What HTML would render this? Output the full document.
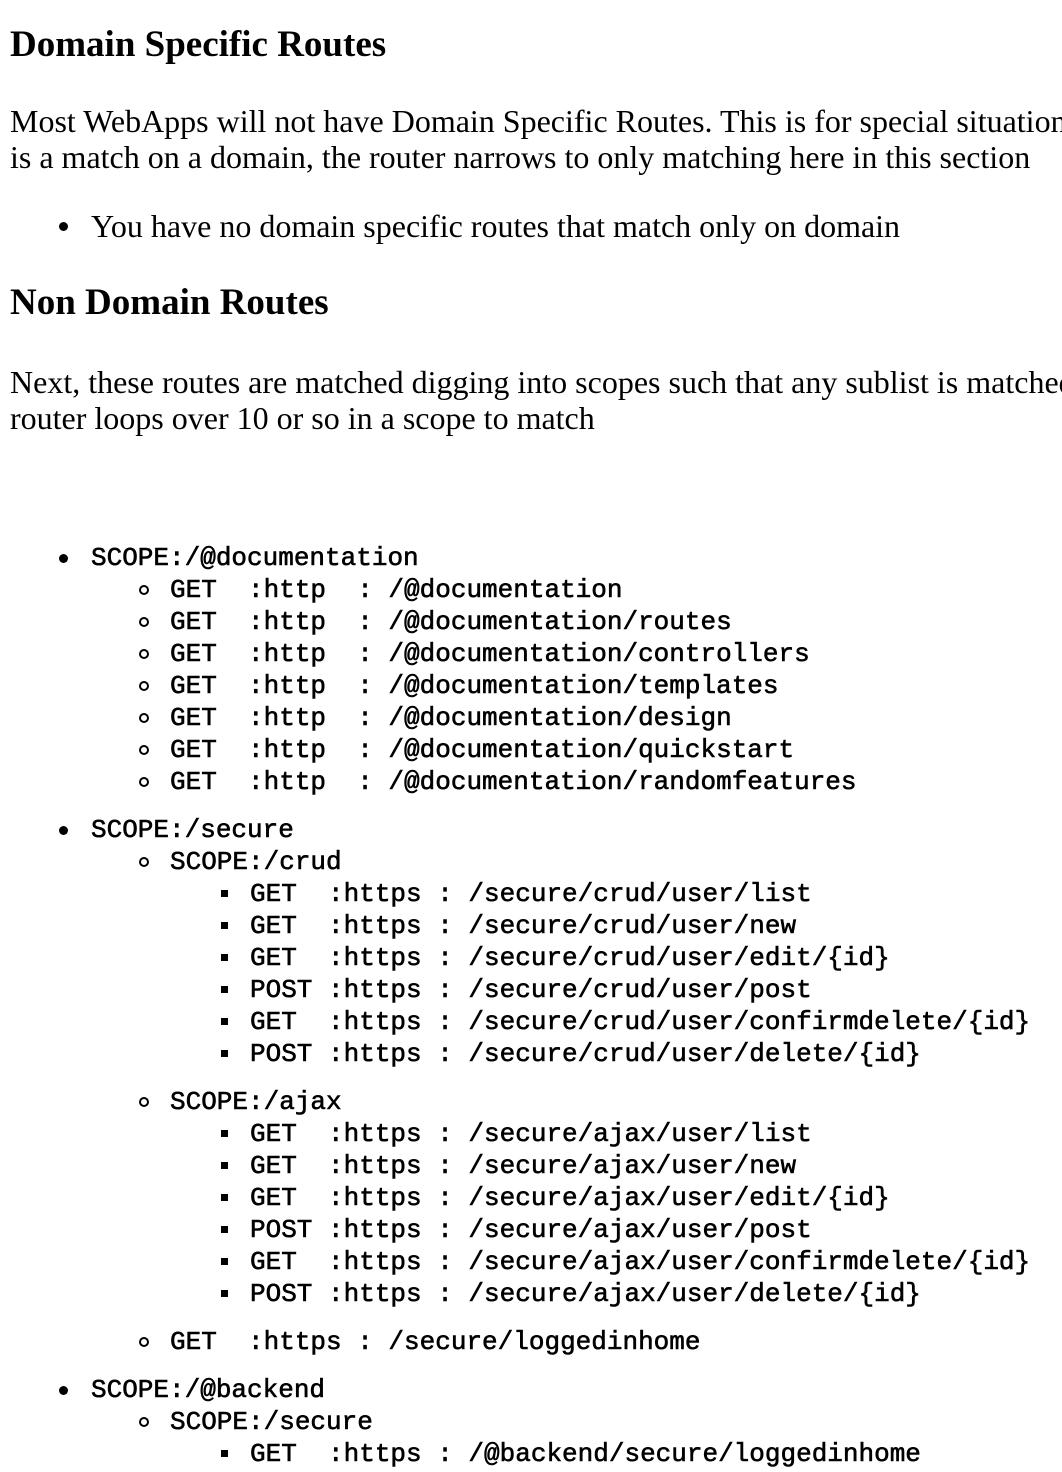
<!DOCTYPE html>
<html><head><meta charset="utf-8"><style>
html,body{margin:0;width:1062px;height:1472px;overflow:hidden}
body{background:#fff;color:#000;position:relative}
.s{position:absolute;left:10px;font-family:"Liberation Serif",serif;font-size:32px;line-height:36px;white-space:nowrap}
.h{position:absolute;left:10px;font-family:"Liberation Serif",serif;font-size:37px;font-weight:bold;line-height:40px;white-space:nowrap}
.m{position:absolute;font-family:"Liberation Mono",monospace;font-size:26px;line-height:32px;white-space:pre;-webkit-text-stroke:0.6px #000}
.b{position:absolute}
.d{width:9px;height:9px;border-radius:50%;background:#000}
.c{width:6px;height:6px;border-radius:50%;border:2px solid #000}
.q{width:7px;height:7px;background:#000}
</style></head><body>
<div class="h" style="top:25px">Domain Specific Routes</div>
<div class="s" style="top:103px">Most WebApps will not have Domain Specific Routes. This is for special situations where there<br>is a match on a domain, the router narrows to only matching here in this section</div>
<div class="b d" style="left:59px;top:222px"></div>
<div class="s" style="left:91px;top:208px">You have no domain specific routes that match only on domain</div>
<div class="h" style="top:283px">Non Domain Routes</div>
<div class="s" style="top:364px">Next, these routes are matched digging into scopes such that any sublist is matched only if the<br>router loops over 10 or so in a scope to match</div>

<div class="b d" style="left:59px;top:554px"></div><div class="m" style="left:91px;top:542px">SCOPE:/@documentation</div>
<div class="b c" style="left:139px;top:585px"></div><div class="m" style="left:170px;top:574px">GET  :http  : /@documentation</div>
<div class="b c" style="left:139px;top:617px"></div><div class="m" style="left:170px;top:606px">GET  :http  : /@documentation/routes</div>
<div class="b c" style="left:139px;top:649px"></div><div class="m" style="left:170px;top:638px">GET  :http  : /@documentation/controllers</div>
<div class="b c" style="left:139px;top:681px"></div><div class="m" style="left:170px;top:670px">GET  :http  : /@documentation/templates</div>
<div class="b c" style="left:139px;top:713px"></div><div class="m" style="left:170px;top:702px">GET  :http  : /@documentation/design</div>
<div class="b c" style="left:139px;top:745px"></div><div class="m" style="left:170px;top:734px">GET  :http  : /@documentation/quickstart</div>
<div class="b c" style="left:139px;top:777px"></div><div class="m" style="left:170px;top:766px">GET  :http  : /@documentation/randomfeatures</div>

<div class="b d" style="left:59px;top:826px"></div><div class="m" style="left:91px;top:814px">SCOPE:/secure</div>
<div class="b c" style="left:139px;top:857px"></div><div class="m" style="left:170px;top:846px">SCOPE:/crud</div>
<div class="b q" style="left:221px;top:890px"></div><div class="m" style="left:250px;top:878px">GET  :https : /secure/crud/user/list</div>
<div class="b q" style="left:221px;top:922px"></div><div class="m" style="left:250px;top:910px">GET  :https : /secure/crud/user/new</div>
<div class="b q" style="left:221px;top:954px"></div><div class="m" style="left:250px;top:942px">GET  :https : /secure/crud/user/edit/{id}</div>
<div class="b q" style="left:221px;top:986px"></div><div class="m" style="left:250px;top:974px">POST :https : /secure/crud/user/post</div>
<div class="b q" style="left:221px;top:1018px"></div><div class="m" style="left:250px;top:1006px">GET  :https : /secure/crud/user/confirmdelete/{id}</div>
<div class="b q" style="left:221px;top:1050px"></div><div class="m" style="left:250px;top:1038px">POST :https : /secure/crud/user/delete/{id}</div>
<div class="b c" style="left:139px;top:1097px"></div><div class="m" style="left:170px;top:1086px">SCOPE:/ajax</div>
<div class="b q" style="left:221px;top:1130px"></div><div class="m" style="left:250px;top:1118px">GET  :https : /secure/ajax/user/list</div>
<div class="b q" style="left:221px;top:1162px"></div><div class="m" style="left:250px;top:1150px">GET  :https : /secure/ajax/user/new</div>
<div class="b q" style="left:221px;top:1194px"></div><div class="m" style="left:250px;top:1182px">GET  :https : /secure/ajax/user/edit/{id}</div>
<div class="b q" style="left:221px;top:1226px"></div><div class="m" style="left:250px;top:1214px">POST :https : /secure/ajax/user/post</div>
<div class="b q" style="left:221px;top:1258px"></div><div class="m" style="left:250px;top:1246px">GET  :https : /secure/ajax/user/confirmdelete/{id}</div>
<div class="b q" style="left:221px;top:1290px"></div><div class="m" style="left:250px;top:1278px">POST :https : /secure/ajax/user/delete/{id}</div>
<div class="b c" style="left:139px;top:1337px"></div><div class="m" style="left:170px;top:1326px">GET  :https : /secure/loggedinhome</div>

<div class="b d" style="left:59px;top:1386px"></div><div class="m" style="left:91px;top:1374px">SCOPE:/@backend</div>
<div class="b c" style="left:139px;top:1417px"></div><div class="m" style="left:170px;top:1406px">SCOPE:/secure</div>
<div class="b q" style="left:221px;top:1450px"></div><div class="m" style="left:250px;top:1438px">GET  :https : /@backend/secure/loggedinhome</div>
</body></html>
